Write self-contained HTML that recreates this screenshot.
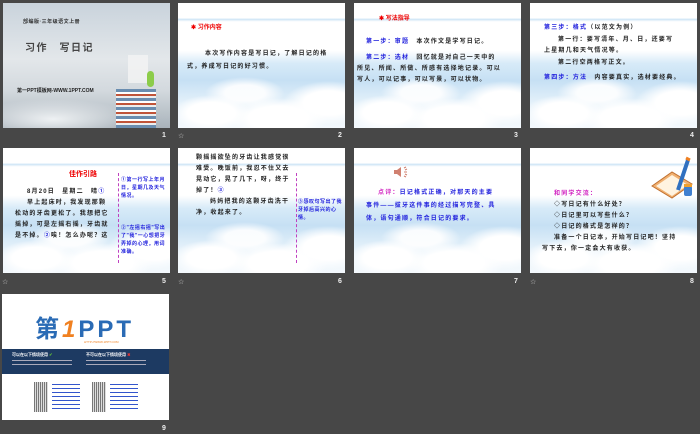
<!DOCTYPE html>
<html><head><meta charset="utf-8"><style>
*{margin:0;padding:0;box-sizing:border-box}
body{width:700px;height:434px;background:#474747;position:relative;overflow:hidden;font-family:"Liberation Sans","Noto Sans CJK SC",sans-serif;}
.s{position:absolute;width:167px;height:125px;overflow:hidden;background:#fff}
.c{background:
radial-gradient(ellipse 40px 18px at 20% 88%,#fff 60%,rgba(255,255,255,0) 100%),
radial-gradient(ellipse 50px 20px at 60% 92%,#fff 60%,rgba(255,255,255,0) 100%),
radial-gradient(ellipse 45px 22px at 90% 80%,#fff 55%,rgba(255,255,255,0) 100%),
radial-gradient(ellipse 40px 16px at 40% 72%,rgba(255,255,255,.9) 50%,rgba(255,255,255,0) 100%),
linear-gradient(#fff 0,#fff 12%,#cfe6f6 13%,#fff 15%,#fff 38%,#d8ebf8 48%,#c6e0f4 62%,#e4f1fa 80%,#f4f9fd 100%)}
.n{position:absolute;color:#eee;font:bold 7px "Liberation Sans",sans-serif}
.st{position:absolute;color:#ccc;font:7px "Liberation Sans",sans-serif}
.t{position:absolute;font-size:6px;line-height:10px;color:#222;font-weight:bold;letter-spacing:1.2px;white-space:nowrap}
.w{white-space:normal}
.b{color:#2222dd}.r{color:#e00}.m{color:#d020c0}
.v{position:absolute;border-left:1px dashed #c040c0}
</style></head><body>

<!-- slide 1 -->
<div class="s" style="left:3px;top:3px;background:linear-gradient(#c9d3dc 0,#e3e7ea 45%,#d3d9de 70%,#a9b3bb 100%)">
 <div class="t" style="left:20px;top:14px;font-size:5px;letter-spacing:.5px;color:#333">部编版·三年级语文上册</div>
 <div class="t" style="left:22px;top:41px;font-size:10px;color:#444;letter-spacing:1.5px">习作　写日记</div>
 <div class="t" style="left:14px;top:83px;font-size:5px;letter-spacing:0;color:#222">第一PPT模板网-WWW.1PPT.COM</div>
 <div style="position:absolute;left:0;top:95px;width:167px;height:30px;background:radial-gradient(ellipse 80px 20px at 30% 70%,#eef1f3,rgba(230,235,240,0))"></div>
 <div style="position:absolute;left:113px;top:86px;width:40px;height:40px;background:repeating-linear-gradient(#6a8db0 0 3px,#fff 3px 5px,#c0543a 5px 7px,#eee 7px 9px)"></div>
 <div style="position:absolute;left:125px;top:52px;width:20px;height:28px;background:#f4f4f4;opacity:.8"></div>
 <div style="position:absolute;left:144px;top:68px;width:7px;height:16px;background:#8ccc4a;border-radius:4px"></div>
</div>
<div class="n" style="left:162px;top:132px">1</div>

<!-- slide 2 -->
<div class="s c" style="left:178px;top:3px">
 <div class="t r" style="left:13px;top:20px;letter-spacing:0">✱ 习作内容</div>
 <div class="t" style="left:27px;top:46px">本次写作内容是写日记，了解日记的格</div>
 <div class="t" style="left:9px;top:59px">式，养成写日记的好习惯。</div>
</div>
<div class="st" style="left:178px;top:132px">☆</div>
<div class="n" style="left:338px;top:132px">2</div>

<!-- slide 3 -->
<div class="s c" style="left:354px;top:3px">
 <div class="t r" style="left:25px;top:11px;letter-spacing:0">✱ 写法指导</div>
 <div class="t" style="left:12px;top:34px"><span class="b">第一步：审题</span>　本次作文是学写日记。</div>
 <div class="t" style="left:12px;top:50px"><span class="b">第二步：选材</span>　回忆就是对自己一天中的</div>
 <div class="t" style="left:3px;top:61px">所见、所闻、所做、所感有选择地记录。可以</div>
 <div class="t" style="left:3px;top:72px">写人，可以记事，可以写景，可以状物。</div>
</div>
<div class="n" style="left:514px;top:132px">3</div>

<!-- slide 4 -->
<div class="s c" style="left:530px;top:3px">
 <div class="t" style="left:14px;top:20px"><span class="b">第三步：格式</span>（以范文为例）</div>
 <div class="t" style="left:28px;top:32px">第一行：要写清年、月、日，还要写</div>
 <div class="t" style="left:14px;top:43px">上星期几和天气情况等。</div>
 <div class="t" style="left:28px;top:55px">第二行空两格写正文。</div>
 <div class="t" style="left:14px;top:70px"><span class="b">第四步：方法</span>　内容要真实，选材要经典。</div>
</div>
<div class="n" style="left:690px;top:132px">4</div>

<!-- slide 5 -->
<div class="s c" style="left:3px;top:148px">
 <div class="t r" style="left:66px;top:22px;font-size:7px;letter-spacing:0">佳作引路</div>
 <div class="t" style="left:24px;top:39px">8月20日　星期二　晴<span class="b">①</span></div>
 <div class="t" style="left:24px;top:50px">早上起床时，我发现那颗</div>
 <div class="t" style="left:12px;top:61px">松动的牙齿更松了。我想把它</div>
 <div class="t" style="left:12px;top:72px">摇掉，可是左摇右摇，牙齿就</div>
 <div class="t" style="left:12px;top:83px">是不掉。<span class="b">②</span>唉！怎么办呢？这</div>
 <div class="v" style="left:115px;top:25px;height:90px"></div>
 <div class="t b w" style="left:118px;top:28px;width:48px;font-size:5px;line-height:8px;letter-spacing:.5px">①第一行写上年月日，星期几及天气情况。<br><br><br><br>②"左摇右摇"写出了"我"一心想把牙弄掉的心理，用词准确。</div>
</div>
<div class="st" style="left:2px;top:278px">☆</div>
<div class="n" style="left:162px;top:278px">5</div>

<!-- slide 6 -->
<div class="s c" style="left:178px;top:148px">
 <div class="t" style="left:18px;top:5px">颗摇摇欲坠的牙齿让我感觉很</div>
 <div class="t" style="left:18px;top:16px">难受。晚饭前，我忍不住又去</div>
 <div class="t" style="left:18px;top:27px">晃动它，晃了几下，呀，终于</div>
 <div class="t" style="left:18px;top:38px">掉了！<span class="b">③</span></div>
 <div class="t" style="left:32px;top:49px">妈妈把我的这颗牙齿洗干</div>
 <div class="t" style="left:18px;top:60px">净，收起来了。</div>
 <div class="v" style="left:118px;top:25px;height:90px"></div>
 <div class="t b w" style="left:120px;top:50px;width:44px;font-size:5px;line-height:8px;letter-spacing:.5px">③感叹句写出了我牙掉后高兴的心情。</div>
</div>
<div class="st" style="left:178px;top:278px">☆</div>
<div class="n" style="left:338px;top:278px">6</div>

<!-- slide 7 -->
<div class="s c" style="left:354px;top:148px">
 <svg style="position:absolute;left:39px;top:17px" width="18" height="14" viewBox="0 0 18 14"><path d="M1 5h3l4-3v10l-4-3H1z" fill="#d08070"/><path d="M11 3l2-1M11 7h3M11 11l2 1M12 5l2-1M12 9l2 1" stroke="#d08070" stroke-width="1"/></svg>
 <div class="t b" style="left:24px;top:40px"><span class="m">点评：</span>日记格式正确，对那天的主要</div>
 <div class="t b" style="left:12px;top:53px">事件——拔牙这件事的经过描写完整、具</div>
 <div class="t b" style="left:12px;top:66px">体，语句通顺，符合日记的要求。</div>
</div>
<div class="n" style="left:514px;top:278px">7</div>

<!-- slide 8 -->
<div class="s c" style="left:530px;top:148px">
 <svg style="position:absolute;left:118px;top:6px" width="46" height="52" viewBox="0 0 46 52"><path d="M4 32l20-14 20 12-20 14z" fill="#f0b070" stroke="#c07030"/><path d="M8 32l16-11 16 10-16 11z" fill="#fff3e0"/><path d="M30 36l10-30" stroke="#3070c0" stroke-width="4"/><path d="M38 4l4 2" stroke="#f08020" stroke-width="3"/><rect x="36" y="32" width="8" height="10" rx="2" fill="#4080d0"/><rect x="36" y="30" width="8" height="3" fill="#f0a030"/></svg>
 <div class="t m" style="left:24px;top:41px">和同学交流：</div>
 <div class="t" style="left:24px;top:52px">◇写日记有什么好处？</div>
 <div class="t" style="left:24px;top:63px">◇日记里可以写些什么？</div>
 <div class="t" style="left:24px;top:74px">◇日记的格式是怎样的？</div>
 <div class="t" style="left:24px;top:85px">准备一个日记本，开始写日记吧！坚持</div>
 <div class="t" style="left:12px;top:96px">写下去，你一定会大有收获。</div>
</div>
<div class="st" style="left:530px;top:278px">☆</div>
<div class="n" style="left:690px;top:278px">8</div>

<!-- slide 9 -->
<div class="s" style="left:2px;top:294px;height:126px">
 <div style="position:absolute;left:33px;top:15px;font:bold 24px 'Liberation Sans','Noto Sans CJK SC',sans-serif;color:#2a6bb5;letter-spacing:3px">第<span style="color:#f08020;font-style:italic">1</span>PPT</div>
 <div style="position:absolute;left:82px;top:46px;font:3px 'Liberation Sans',sans-serif;color:#f08020">HTTP://WWW.1PPT.COM</div>
 <div style="position:absolute;left:0;top:55px;width:167px;height:25px;background:#1d3a62"></div>
 <div style="position:absolute;left:10px;top:58px;font:bold 4px 'Liberation Sans','Noto Sans CJK SC',sans-serif;color:#fff">可以在以下情境使用 <span style="color:#6c3">✔</span></div>
 <div style="position:absolute;left:84px;top:58px;font:bold 4px 'Liberation Sans','Noto Sans CJK SC',sans-serif;color:#fff">不可以在以下情境使用 <span style="color:#e33">✖</span></div>
 <div style="position:absolute;left:10px;top:66px;width:60px;height:1px;background:#aab;box-shadow:0 4px 0 #aab"></div>
 <div style="position:absolute;left:84px;top:66px;width:60px;height:1px;background:#aab;box-shadow:0 4px 0 #aab"></div>
 <div style="position:absolute;left:32px;top:88px;width:14px;height:30px;background:repeating-linear-gradient(90deg,#777 0 1px,#ddd 1px 2px)"></div>
 <div style="position:absolute;left:50px;top:90px;width:28px;height:26px;background:repeating-linear-gradient(#35c 0 1px,#fff 1px 4px)"></div>
 <div style="position:absolute;left:90px;top:88px;width:14px;height:30px;background:repeating-linear-gradient(90deg,#777 0 1px,#ddd 1px 2px)"></div>
 <div style="position:absolute;left:108px;top:90px;width:28px;height:26px;background:repeating-linear-gradient(#35c 0 1px,#fff 1px 4px)"></div>
</div>
<div class="n" style="left:162px;top:425px">9</div>
</body></html>
